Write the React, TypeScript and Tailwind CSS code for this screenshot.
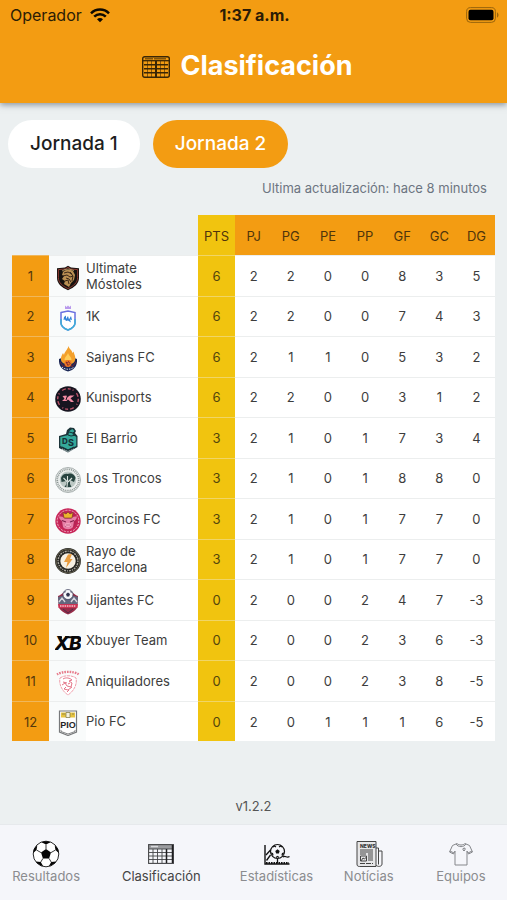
import { useState } from 'react';
import type { ReactNode } from 'react';
import clsx from 'clsx';

interface Team {
  name: string;
  crest: ReactNode;
  pts: number;
  stats: number[];
}

const columns = ['PJ', 'PG', 'PE', 'PP', 'GF', 'GC', 'DG'];

function Crest({ children }: { children: ReactNode }) {
  return (
    <svg viewBox="0 0 26 26" className="mx-auto h-[26px] w-[26px]" aria-hidden="true">
      {children}
    </svg>
  );
}

const teams: Team[] = [
  {
    name: 'Ultimate Móstoles',
    pts: 6,
    stats: [2, 2, 0, 0, 8, 3, 5],
    crest: (
      <>
        <path d="M13 .8 16 2.500l8 .8v9.400c0 6-4.500 9.500-11 12.500C6.500 22.200 2 18.700 2 12.700V3.300l8-.8z" fill="#17120f" />
        <path d="M13 2.300 15.600 4l7 .6v8c0 5.200-4 8.300-9.600 11-5.600-2.700-9.600-5.800-9.600-11v-8l7-.6z" fill="none" stroke="#a8443a" strokeWidth=".8" />
        <path d="M8 7c2-2.500 7-3 10-1l2 4-1 5-3 3-2 4-5-3 1-3-3-2 2-3-2-1z" fill="#b98f52" />
        <path d="m9 8 4-1 4 2M8 11l4-1 3 2 3-1M11 13l3 1 2 3M10 16l3-1 1 4M15 7l3 4-1 5" fill="none" stroke="#2b1b12" strokeWidth=".9" />
        <path d="m7 6 3-1.500 4-.5 5 1.500" fill="none" stroke="#dfbd7c" strokeWidth=".7" />
      </>
    ),
  },
  {
    name: '1K',
    pts: 6,
    stats: [2, 2, 0, 0, 7, 4, 3],
    crest: (
      <>
        <path d="m10 .5 1.500 1.500L13 .5 14.500 2 16 .5V4h-6z" fill="#b99aec" />
        <path d="M6 7.500 13 6l7 1.500V18c0 3.500-3 5.500-7 7-4-1.500-7-3.500-7-7z" fill="#fff" stroke="#6a70e0" strokeWidth="1.500" />
        <path d="M6 14v4c0 3.500 3 5.500 7 7 4-1.500 7-3.500 7-7v-4" fill="none" stroke="#3bb0d8" strokeWidth="1.500" />
        <path d="m9 12 2-1.500V14l2-3 1 3.500 2-3.500 1 4-2-.5 1 3-3-2-2 .5-1-1.500-1.500.5z" fill="#3384d8" />
      </>
    ),
  },
  {
    name: 'Saiyans FC',
    pts: 6,
    stats: [2, 1, 1, 0, 5, 3, 2],
    crest: (
      <>
        <path d="M4 13c5-2 13-2 18 0 .5 7-3 11-9 12.500C7 24 3.500 20 4 13z" fill="#1b2856" />
        <path d="M13.500 0c.5 3 3.500 4 4 7l1-1.500c1 4 2.500 5 1.500 9-1 3-3.500 3.500-7 3.500s-6.500-1-7-4c-.500-3 1-5 2-7l1 2c.5-3.500 3.500-5 4.500-9z" fill="#f3a02c" />
        <path d="M13 7c1 3 3.500 4 3.500 7h-7c0-3 2.500-4 3.500-7z" fill="#ffcc58" />
        <circle cx="13" cy="17.500" r="3.500" fill="#ed7724" />
        <path d="m11 16 1.500 1 1-1.500 1.500 2-2 2zM5 16l4 5 1-2M21 16l-4 5-1-2" fill="none" stroke="#7b2430" strokeWidth=".9" />
        <path d="M7 21c3 3 9 3 12 0" fill="none" stroke="#d7dbe8" strokeDasharray="1.500 1" />
      </>
    ),
  },
  {
    name: 'Kunisports',
    pts: 6,
    stats: [2, 2, 0, 0, 3, 1, 2],
    crest: (
      <>
        <circle cx="13" cy="13" r="12.800" fill="#171520" />
        <circle cx="13" cy="13" r="10.300" fill="none" stroke="#ba5369" strokeWidth="1.400" strokeDasharray="3 2 1 4 4 2" />
        <path d="m7.500 10 4-.5.5 2 3-2h4.500l-4 2.800 3.500 3.700h-3l-3-2.500-1.500 1.500H7l2.500-2.200z" fill="#f18ba3" />
        <path d="m12 11-1 3" stroke="#171520" />
      </>
    ),
  },
  {
    name: 'El Barrio',
    pts: 3,
    stats: [2, 1, 0, 1, 7, 3, 4],
    crest: (
      <>
        <path d="m4 9 7-2 1-4 3-2.500 4 .5 2 3-1 2 2.500 3v11L13 25.500 4 21z" fill="#1c3439" />
        <path d="m5.300 10 8-2 1-4 3-2 2 2-2 3 4 3v9L13 22.500 5.300 19z" fill="#35a99a" />
        <path d="m14 5 4 1 2-2M13 8l3 1 5-1M7 20l6 3 6-3" fill="none" stroke="#163338" strokeWidth="1" />
        <text x="7" y="16.500" fontSize="8" fontWeight="800" fontFamily="Inter, sans-serif" fill="#173239">D</text>
        <text x="13" y="19" fontSize="9" fontWeight="800" fontFamily="Inter, sans-serif" fill="#173239">S</text>
        <path d="m7 22 6 2.500 6-2.500" fill="none" stroke="#d8e0e1" strokeDasharray="1.500 .8" />
      </>
    ),
  },
  {
    name: 'Los Troncos',
    pts: 3,
    stats: [2, 1, 0, 1, 8, 8, 0],
    crest: (
      <>
        <circle cx="13" cy="13" r="12.500" fill="#edf0ef" stroke="#889290" strokeWidth=".7" />
        <circle cx="13" cy="13" r="10.700" fill="none" stroke="#8b9593" strokeWidth="1.700" strokeDasharray="1 .9" />
        <circle cx="13" cy="12.800" r="8.300" fill="#bcc8c4" />
        <path d="M6 11c1-4 5-5 7-4 3-1.500 7 1 7.500 4l-1.500 4-4-2v4l1.500 3h-7l2-3v-3l-5 1z" fill="#27433f" />
        <path d="m12 20 .5-5-4-4m4.500 4 4-4m-4.500 3V9" fill="none" stroke="#dbe3df" strokeWidth="1.100" />
      </>
    ),
  },
  {
    name: 'Porcinos FC',
    pts: 3,
    stats: [2, 1, 0, 1, 7, 7, 0],
    crest: (
      <>
        <circle cx="13" cy="13" r="12.700" fill="#c82659" />
        <circle cx="13" cy="13" r="10.800" fill="none" stroke="#edb1c4" strokeWidth="1" strokeDasharray="2 1.200" />
        <circle cx="13" cy="12.500" r="9" fill="#b72455" />
        <path d="M4 8.500c4-.5 5 1 6 2h6c1-1 2-2.500 6-2-.5 3-2 4-3 4.500L18 19c-2 3-8 3-10 0l-1-6C5 12 4 10 4 8.500z" fill="#e780a7" />
        <path d="M8 4.500 11 6l2-2 2 2 3-1.500-1 5.500H9z" fill="#edb52d" stroke="#6e3726" strokeWidth=".6" />
        <path d="M7 12.500 11 14m8-1.500L15 14M10 18h6" stroke="#7e1e48" strokeWidth="1.100" />
        <ellipse cx="13" cy="17" rx="3" ry="2" fill="#f3a6c2" />
        <path d="M12 16.500v1m2-1v1" stroke="#9c315c" />
      </>
    ),
  },
  {
    name: 'Rayo de Barcelona',
    pts: 3,
    stats: [2, 1, 0, 1, 7, 7, 0],
    crest: (
      <>
        <circle cx="13" cy="13" r="12.900" fill="#242421" />
        <circle cx="13" cy="13" r="12" fill="none" stroke="#8b8469" strokeWidth=".6" />
        <circle cx="13" cy="13" r="9.900" fill="none" stroke="#aaa79d" strokeWidth="1.400" strokeDasharray="1.200 1 2 .9" />
        <circle cx="13" cy="13" r="7.700" fill="#f6f0e4" />
        <path d="m13 6.500 4-.5-2 5h2.500L11 20l1.500-6H9z" fill="#e89c3f" />
      </>
    ),
  },
  {
    name: 'Jijantes FC',
    pts: 0,
    stats: [2, 0, 0, 2, 4, 7, -3],
    crest: (
      <>
        <path d="M3 7c4-1 5-5 10-5s6 4 10 5l-1 12c-2 3-5 5-9 6.500C9 24 6 22 4 19z" fill="#962c48" />
        <path d="m3 8 7-2 3 4 3-4 7 2-.5 7h-19z" fill="#63677e" />
        <path d="m4 13 3-4 3 4M16 13l3-4 3 4" fill="none" stroke="#d6d7df" strokeWidth="1.300" />
        <circle cx="13" cy="5.500" r="5" fill="#f6f7fa" stroke="#3a3d59" strokeWidth=".7" />
        <path d="m13 3.500 2 1.500-.8 2.500h-2.400L11 5zM8.500 4l1.500-2 1 1M17.500 4 16 2l-1 1M10 9l1-1M16 9l-1-1" fill="#30334e" />
        <path d="M3 15h20l-.5 4h-19z" fill="#ca3454" />
        <path d="M5 17h16" stroke="#f4c2cc" strokeWidth="1.400" strokeDasharray="1.500 .8" />
        <path d="m8 20 5 4 5-4" fill="none" stroke="#512b49" />
      </>
    ),
  },
  {
    name: 'Xbuyer Team',
    pts: 0,
    stats: [2, 0, 0, 2, 3, 6, -3],
    crest: (
      <>
        <text
          x="13"
          y="21"
          textAnchor="middle"
          fontSize="19"
          fontWeight="800"
          fontStyle="italic"
          fontFamily="Inter, sans-serif"
          fill="#090909"
        >
          XB
        </text>
        <path d="M3 8.300h4M10 8.300h8M9 20h9" stroke="#090909" strokeWidth="2" />
      </>
    ),
  },
  {
    name: 'Aniquiladores',
    pts: 0,
    stats: [2, 0, 0, 2, 3, 8, -5],
    crest: (
      <>
        <path d="M2 4.500c5-3.500 17-3.500 22 0" fill="none" stroke="#e77b8b" strokeWidth="2.400" strokeDasharray="1.600 1" />
        <path d="M5 8c4-3 12-3 16 0 1.500 6-2 13-8 17C7 21 3.500 14 5 8z" fill="#fff" stroke="#ee94a1" strokeWidth=".9" strokeDasharray="3 .7" />
        <path d="M8 9c3-2 7-1 9 1l-3 1 3 2-1 4-4-1-2-3-3 2M8 12l4 1M11 17l-2 2 4 1 4-3M13 14l2-1M12 22l2-2" fill="none" stroke="#e0657a" strokeWidth=".9" />
      </>
    ),
  },
  {
    name: 'Pio FC',
    pts: 0,
    stats: [2, 0, 1, 1, 1, 6, -5],
    crest: (
      <>
        <path d="M4.500 1h17v21L13 25.500 4.500 22z" fill="#fff" stroke="#77797b" strokeWidth="1.200" />
        <path d="M6 2.500h14v5H6z" fill="#e6c441" />
        <path d="M11 2.500h4v5h-4zM7 4h3M17 4h2" fill="#f5f2dc" stroke="#77724b" strokeWidth=".7" />
        <text x="13" y="18" textAnchor="middle" fontSize="9" fontWeight="700" fontFamily="Liberation Sans, sans-serif" fill="#252627">
          PIO
        </text>
        <path d="M6 20v1.500l7 2.500 7-2.500V20" fill="none" stroke="#77797b" strokeWidth=".9" />
      </>
    ),
  },
];

function HeaderTableIcon() {
  return (
    <svg viewBox="0 0 28 22" className="h-[22px] w-7" fill="none" stroke="#3a2605" aria-hidden="true">
      <rect x=".7" y=".7" width="26.600" height="20.600" rx="2" strokeWidth="1.400" />
      <path d="M3 2.700h8M12 2.700h12" strokeWidth="1.600" opacity=".6" />
      <path d="M1 4.700h26" strokeWidth="1.300" />
      <path d="M2 8.700h24M2 12.700h24M2 16.700h24" strokeWidth="1.400" />
      <path d="M5.500 5v16M9.500 5v16M18.500 5v16M22.500 5v16" strokeWidth=".8" opacity=".7" />
      <path d="M14 5v16" strokeWidth="2" />
    </svg>
  );
}

function TableIcon() {
  return (
    <svg viewBox="0 0 26 20" className="h-5 w-[26px]" fill="none" stroke="#444548" aria-hidden="true">
      <path d="M1 3h24" stroke="#9b9c9f" strokeWidth="4" />
      <path d="M3 2.500h7" stroke="#d9dadd" strokeWidth="1.500" />
      <rect x=".6" y=".6" width="24.800" height="18.800" strokeWidth="1.100" />
      <path d="M1 5h24M1 8.500h24M1 12h24M1 15.500h24" strokeWidth=".9" />
      <path d="M5 5v14M9.500 5v14M14 5v14" strokeWidth=".9" />
      <path d="M18.500 5v14M24.500 1v18" stroke="#1e1e20" strokeWidth="1.500" />
    </svg>
  );
}

function BallIcon() {
  return (
    <svg viewBox="0 0 28 28" className="h-7 w-7" aria-hidden="true">
      <circle cx="14" cy="14" r="12.800" fill="#fff" stroke="#111" strokeWidth=".9" />
      <path d="m14 9 5 3.600-1.900 5.900h-6.200L9 12.600z" fill="#050505" />
      <path d="M9.500 2.300 14 4.500l4.500-2.200c-3-1.400-6-1.400-9 0zM1.300 13l3.200-3 .8-4.500C2.500 7.500 1.200 10 1.300 13zM26.700 13l-3.200-3-.8-4.500c2.800 2 4.100 4.500 4 7.500zM4 21.500l4.800.5 2.400 4.300C8 25.500 5.700 24 4 21.500zM24 21.500l-4.800.5-2.400 4.300c3.200-.8 5.500-2.300 7.200-4.800z" fill="#050505" />
      <path d="M14 4.500V9M4.500 10 9 12.600M23.500 10 19 12.600M8.800 22l2.100-3.500M19.200 22l-2.100-3.500" stroke="#222" strokeWidth=".9" />
    </svg>
  );
}

function StatsIcon() {
  return (
    <svg viewBox="0 0 28 28" className="h-7 w-7" fill="none" stroke="#111" aria-hidden="true">
      <path d="M2 5v19h24.500" strokeWidth="1.400" />
      <path d="M3 23h23" strokeWidth="2" strokeDasharray="1.600 .9" />
      <circle cx="14.500" cy="11.500" r="7" strokeWidth="1.200" />
      <path d="m3 15 4.500-5M20 17c2.500-2 3.500 1.500 6.500-.5M7.500 15l-4 5.500M14.500 18.500V23" strokeWidth="1.300" />
      <path d="m14.500 9.300 2.200 1.700-.9 2.600h-2.600l-.9-2.600z" fill="#111" stroke="none" />
      <path d="m10 7 1.500-1 1.500 1M19 7l-1.500-1L16 7M8 13l1.500.5.5 2M21 13l-1.500.5-.5 2M13 17.500l1.500-1 1.500 1" strokeWidth="1.200" />
    </svg>
  );
}

function NewsIcon() {
  return (
    <svg viewBox="0 0 28 28" className="h-7 w-7" fill="none" stroke="#444" aria-hidden="true">
      <path d="M2 1.500h19v25H4.500C2.500 26.500 2 25.500 2 24z" fill="#e6e6e8" />
      <path d="M21 8h2.500v16.500M23.500 11H27v13c0 3-5 3-6 1" />
      <text x="5" y="7.500" fontSize="5" fontWeight="800" fontFamily="Inter, sans-serif" fill="#333" stroke="none">NEWS</text>
      <path d="M5 10h13M5 12h13M5 14h6" strokeWidth="1.200" />
      <path d="M5.500 16h6v5h-6zM6 21l2-3 1.500 1 2-2" />
      <path d="M13 14h5M13 16h5M13 18h5M13 20h5" />
      <path d="M5 23.500h13" strokeWidth="1.200" strokeDasharray="5 1" />
    </svg>
  );
}

function ShirtIcon() {
  return (
    <svg viewBox="0 0 28 28" className="h-7 w-7" fill="none" stroke="#85878b" strokeWidth="1" aria-hidden="true">
      <path d="M10 3.500c2 2 6 2 8 0l4.500 2 3 6.500-4 2-1.500-3V25H8V11l-1.500 3-4-2 3-6.500z" />
      <path d="M9 4c2 3.500 8 3.500 10 0M3 11l4 2M25 11l-4 2" />
      <path d="m16 8.500 2-.5v2l-1 1-1-1z" />
    </svg>
  );
}

const tabs = [
  { label: 'Resultados', icon: <BallIcon /> },
  { label: 'Clasificación', icon: <TableIcon /> },
  { label: 'Estadísticas', icon: <StatsIcon /> },
  { label: 'Notícias', icon: <NewsIcon /> },
  { label: 'Equipos', icon: <ShirtIcon /> },
];

function StatusBar() {
  return (
    <div className="grid h-[30px] grid-cols-3 items-center pr-2 pl-[10px] text-[#2b1c05]">
      <div className="flex items-center gap-2 text-base">
        <span>Operador</span>
        <svg viewBox="0 0 20 15" className="h-[15px] w-5" fill="none" stroke="#0d0901" strokeWidth="2.500" aria-hidden="true">
          <path d="M1 5.300c5-5 13-5 18 0M4.200 8.700c3.300-3.300 8.300-3.300 11.600 0" />
          <path d="M7 11.200c1.700-1.700 4.300-1.700 6 0l-3 3z" fill="#0d0901" stroke="none" />
        </svg>
      </div>
      <span className="text-center text-base font-bold">1:37 a.m.</span>
      <svg viewBox="0 0 33 16" className="h-4 w-[33px] justify-self-end" aria-hidden="true">
        <rect x=".6" y=".6" width="28.800" height="14.800" rx="4" fill="none" stroke="#9a650d" />
        <rect x="2.500" y="2.700" width="25" height="10.600" rx="2" />
        <path d="M31 5.500c2 .5 2 4.500 0 5z" fill="#9a650d" />
      </svg>
    </div>
  );
}

function StandingsTable() {
  return (
    <table className="w-full table-fixed border-collapse text-center text-[13px] text-[#3d3d3d]">
      <colgroup>
        <col className="w-[37px]" />
        <col className="w-[37px]" />
        <col className="w-[112px]" />
        <col span={8} />
      </colgroup>
      <thead>
        <tr className="h-10 text-[#4f350b]">
          <td colSpan={3} />
          <th scope="col" className="bg-[#f1c40f] pt-1 font-normal">PTS</th>
          {columns.map((column) => (
            <th key={column} scope="col" className="bg-[#f39c12] pt-1 font-normal">
              {column}
            </th>
          ))}
        </tr>
      </thead>
      <tbody>
        {teams.map((team, index) => (
          <tr key={team.name} className="h-10 border-t border-[#eceeee] bg-white odd:h-[41px]">
            <td className="border-t border-[#f0b75b] bg-[#f39c12] pt-0.5 text-[#54380c]">{index + 1}</td>
            <td className="bg-[#f9fbfb] pt-1">
              <Crest>{team.crest}</Crest>
            </td>
            <th scope="row" className="pr-6 text-left leading-4 font-normal">
              {team.name}
            </th>
            <td className="border-t border-[#f0d566] bg-[#f1c40f] pt-0.5 text-[#54450c]">{team.pts}</td>
            {team.stats.map((stat, i) => (
              <td key={columns[i]} className="pt-0.5">{stat}</td>
            ))}
          </tr>
        ))}
      </tbody>
    </table>
  );
}

export default function App() {
  const [round, setRound] = useState(2);

  return (
    <div className="flex min-h-screen flex-col bg-[#ecf0f1] font-['Inter','Noto_Sans',sans-serif]">
      <header className="bg-[#f39c12] shadow-[0_2px_6px_rgba(60,75,90,0.55)]">
        <StatusBar />
        <div className="flex h-[73px] items-center justify-center gap-[10px] pr-3">
          <HeaderTableIcon />
          <h1 className="text-[27px] font-bold text-white">Clasificación</h1>
        </div>
      </header>

      <main className="flex flex-1 flex-col">
        <div className="flex gap-[13px] px-2 pt-[17px]">
          {[1, 2].map((n) => (
            <button
              key={n}
              type="button"
              onClick={() => setRound(n)}
              className={clsx(
                'h-12 rounded-full px-[22px] text-[19px] font-medium',
                round === n ? 'bg-[#f39c12] text-white' : 'bg-white text-[#1d1d1d]',
              )}
            >
              Jornada {n}
            </button>
          ))}
        </div>
        <p className="px-5 pt-[10px] text-right text-[13px] leading-5 text-[#6c7581]">
          Ultima actualización: hace 8 minutos
        </p>
        <div className="px-3 pt-[17px]">
          <StandingsTable />
        </div>
        <p className="mt-auto pb-2 text-center text-[13px] leading-5 text-[#555]">v1.2.2</p>
      </main>

      {/* barra de navegación */}
      <nav className="flex h-[76px] border-t border-[#e6e9ec] bg-[#f5f6fa]">
        {tabs.map((tab) => {
          const active = tab.label === 'Clasificación';
          return (
            <a
              key={tab.label}
              href="#"
              className={clsx(
                'flex min-w-0 flex-col items-center pt-[15px] text-[13px] leading-4',
                active ? 'flex-[3] text-[#444]' : 'flex-[2] text-[#8b8c8f]',
              )}
            >
              <span className="flex h-7 items-center">{tab.icon}</span>
              {tab.label}
            </a>
          );
        })}
      </nav>
    </div>
  );
}
